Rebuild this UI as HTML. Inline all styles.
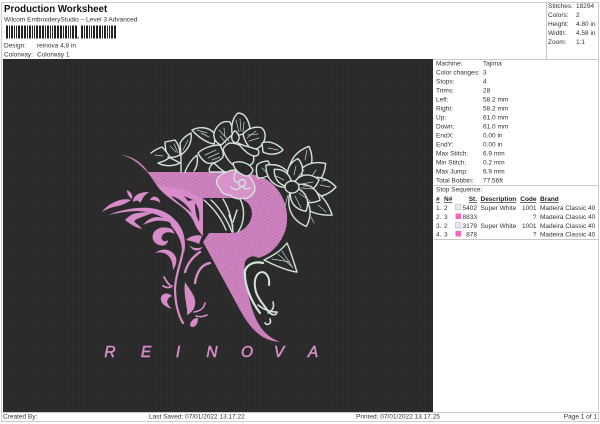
<!DOCTYPE html>
<html><head><meta charset="utf-8"><style>
html,body{margin:0;padding:0;background:#fff}
svg{display:block}
text{font-family:"Liberation Sans",sans-serif;font-size:6.5px;fill:#333}
.b{font-weight:bold;text-decoration:underline;fill:#222}
.w{fill:none;stroke:#d3e2dd;stroke-width:1.4;stroke-linejoin:round;stroke-linecap:round}
.t{fill:none;stroke:#c3d2ce;stroke-width:.7;stroke-linecap:round}
.o{fill:#d78bc9}
.s{fill:none;stroke:#d78bc9;stroke-linecap:round}
.l{font-family:"Liberation Sans",sans-serif;font-size:15.500px;font-style:italic;fill:#d78bc9;stroke:#d78bc9;stroke-width:.5;text-anchor:middle}
</style></head><body>
<svg width="600" height="424" viewBox="0 0 600 424" xmlns="http://www.w3.org/2000/svg">
<defs>
<pattern id="fab" width="11" height="24" patternUnits="userSpaceOnUse">
<rect width="11" height="24" fill="#2b2b2b"/>
<path d="M2 0V24M7 0V24" stroke="#2e2e2e" stroke-width="1"/>
<path d="M0 12H11" stroke="#272727" stroke-width="1" stroke-dasharray="1 1"/>
</pattern>
<pattern id="sat" width="3" height="3" patternUnits="userSpaceOnUse" patternTransform="rotate(-28)">
<rect width="3" height="3" fill="#c67bb8"/>
<path d="M0 .5H3" stroke="#d28bc5" stroke-width="1"/>
</pattern>
</defs>
<rect width="600" height="424" fill="#fff"/>
<path d="M1.500 2.500H598.500V421.500H1.500Z" fill="none" stroke="#ccc"/>
<path d="M546.500 2V59M433 59.500H599M2 412.500H599M433.500 185.500H599M433.500 239.500H599" stroke="#c8c8c8" fill="none"/>
<rect x="3" y="59" width="430" height="353" fill="url(#fab)"/>

<text x="4" y="12" style="font-size:9.700px;font-weight:bold;fill:#111">Production Worksheet</text>
<text x="4" y="21.500">Wilcom EmbroideryStudio – Level 3 Advanced</text>
<path d="M6 32H77" stroke="#222" stroke-width="13" stroke-dasharray="2 1 1 1 2 1 1 1 1 1 2 1 2 1"/>
<path d="M81 32H116" stroke="#222" stroke-width="13" stroke-dasharray="2 1 1 1 2 1 1 1 1 1 2 1 2 1"/>
<text x="77" y="38" style="font-weight:bold;font-size:7px">,</text>
<text x="4" y="47.500">Design:</text><text x="37" y="47.500">reinova 4,8 in</text>
<text x="4" y="56.500">Colorway:</text><text x="37" y="56.500">Colorway 1</text>

<text x="548" y="8">Stitches:</text><text x="576" y="8">18294</text>
<text x="548" y="17">Colors:</text><text x="576" y="17">2</text>
<text x="548" y="26">Height:</text><text x="576" y="26">4.80 in</text>
<text x="548" y="35">Width:</text><text x="576" y="35">4.58 in</text>
<text x="548" y="44">Zoom:</text><text x="576" y="44">1:1</text>

<g>
<text x="436" y="65.500">Machine:</text><text x="483" y="65.500">Tajima</text>
<text x="436" y="74.500">Color changes:</text><text x="483" y="74.500">3</text>
<text x="436" y="83.500">Stops:</text><text x="483" y="83.500">4</text>
<text x="436" y="92.500">Trims:</text><text x="483" y="92.500">28</text>
<text x="436" y="101.500">Left:</text><text x="483" y="101.500">58.2 mm</text>
<text x="436" y="110.500">Right:</text><text x="483" y="110.500">58.2 mm</text>
<text x="436" y="119.500">Up:</text><text x="483" y="119.500">61.0 mm</text>
<text x="436" y="128.500">Down:</text><text x="483" y="128.500">61.0 mm</text>
<text x="436" y="137.500">EndX:</text><text x="483" y="137.500">0.00 in</text>
<text x="436" y="146.500">EndY:</text><text x="483" y="146.500">0.00 in</text>
<text x="436" y="155.500">Max Stitch:</text><text x="483" y="155.500">6.9 mm</text>
<text x="436" y="164.500">Min Stitch:</text><text x="483" y="164.500">0.2 mm</text>
<text x="436" y="173.500">Max Jump:</text><text x="483" y="173.500">6.9 mm</text>
<text x="436" y="182.500">Total Bobbin:</text><text x="483" y="182.500">77.56ft</text>
<text x="436" y="191.500">Stop Sequence:</text>
<text x="436" y="201" class="b">#</text><text x="444" y="201" class="b">N#</text>
<text x="477" y="201" class="b" text-anchor="end">St.</text><text x="480.500" y="201" class="b">Description</text>
<text x="536.500" y="201" class="b" text-anchor="end">Code</text><text x="540" y="201" class="b">Brand</text>

<text x="436" y="210">1.</text><text x="444" y="210">2</text><rect x="455.500" y="204.500" width="5.500" height="5.500" fill="#e6e6f5" stroke="#aaa" stroke-width=".5"/>
<text x="477" y="210" text-anchor="end">5402</text><text x="480.500" y="210">Super White</text><text x="536.500" y="210" text-anchor="end">1001</text><text x="540" y="210">Madeira Classic 40</text>
<text x="436" y="219">2.</text><text x="444" y="219">3</text><rect x="455.500" y="213.500" width="5.500" height="5.500" fill="#f464c0"/>
<text x="477" y="219" text-anchor="end">8833</text><text x="536.500" y="219" text-anchor="end">?</text><text x="540" y="219">Madeira Classic 40</text>
<text x="436" y="228">3.</text><text x="444" y="228">2</text><rect x="455.500" y="222.500" width="5.500" height="5.500" fill="#e6e6f5" stroke="#aaa" stroke-width=".5"/>
<text x="477" y="228" text-anchor="end">3179</text><text x="480.500" y="228">Super White</text><text x="536.500" y="228" text-anchor="end">1001</text><text x="540" y="228">Madeira Classic 40</text>
<text x="436" y="236.500">4.</text><text x="444" y="236.500">3</text><rect x="455.500" y="231" width="5.500" height="5.500" fill="#f464c0"/>
<text x="477" y="236.500" text-anchor="end">878</text><text x="536.500" y="236.500" text-anchor="end">?</text><text x="540" y="236.500">Madeira Classic 40</text>
</g>

<text x="3" y="418.500">Created By:</text>
<text x="149" y="418.500">Last Saved: 07/01/2022 13.17.22</text>
<text x="356" y="418.500">Printed: 07/01/2022 13.17.25</text>
<text x="597" y="418.500" text-anchor="end">Page 1 of 1</text>

<!-- R body -->
<path fill="url(#sat)" fill-rule="evenodd" d="M121 155C133 156 142 163 148 172L212 172C235 172 258 172 270 182C283 192 290 210 286 228C282 243 271 255 258 258C254 255 248 256 245 262C243 272 248 298 254 314C260 331 270 338 280 342C264 341 252 332 240 310L203 242L209 233L232 233C244 232 251 224 252 214C252 205 246 199 236 198L203 198L190 192L157 186C152 178 148 172 143 168C137 162 130 157 121 155Z"/>
<!-- counter foliage -->
<g class="w">
<path d="M204 200C212 207 221 217 226 230M211 200C219 207 227 219 232 232M223 199C228 207 232 219 233 232M240 199C245 208 245 222 238 232"/>
<path d="M233 222L237 210M233 226L229 215"/>
</g>
<!-- small flower on R -->
<path class="w" d="M218 178C221 173 225 173 227 172C232 169 237 170 240 172C246 172 251 177 253 182C256 187 255 192 253 193C251 197 247 199 243 198C238 200 233 198 230 195C225 195 220 192 220 188C216 185 216 181 218 178Z" style="fill:#d792c9"/>
<circle cx="242" cy="183" r="3.500" class="w"/>
<path class="w" d="M236 172C232 178 234 182 239 183M250 188C245 190 243 188 242 186M231 187C235 191 239 190 241 186"/>

<!-- flower 1 -->
<g class="w" style="fill:#2b2b2b">
<path d="M192 130C198 127 208 126 214 133C215 138 215 142 214 144C207 143 198 137 192 130Z"/>
<path d="M214 133C216 126 222 120 230 122C232 126 233 130 233 134C228 138 224 143 221 145C216 143 213 138 214 133Z"/>
<path d="M232 133C231 125 233 117 238 113C244 113 248 118 250 128C247 131 245 133 243 134C238 136 234 135 232 133Z"/>
<path d="M243 134C248 128 256 126 262 128C266 132 266 138 263 143C260 148 255 150 252 150C248 146 244 140 243 134Z"/>
<path d="M198 153C203 148 212 145 220 145C222 149 224 153 223 157C219 162 212 164 207 163C203 161 200 157 198 153Z"/>
<path d="M262 143C269 140 278 144 283 150C279 154 271 156 263 152Z"/>
<path d="M257 165C260 162 265 161 268 161C271 166 271 172 269 175C265 178 261 178 258 178C256 174 256 168 257 165Z"/>
<path d="M214 163C219 168 224 172 226 172C222 172 218 172 210 172C208 170 210 165 214 163Z"/>
<path d="M223 150C224 146 228 143 231 143C238 143 248 149 253 155C255 160 253 164 250 165C246 168 240 168 237 167C231 165 226 158 223 150Z"/>
<path d="M233 163C240 160 250 163 253 170C252 174 249 176 246 176C240 174 234 170 233 163Z"/>
<path d="M232 135C234 130 236 130 237 133C240 136 240 140 236 143C232 142 231 138 232 135Z"/>
<path d="M238 143C243 146 252 147 258 150C260 153 258 156 255 156C250 156 243 150 238 143Z"/>
</g>
<path class="t" d="M239 132L236 120M243 132L244 122M241 131L240 119M247 138L256 131M249 141L259 138M248 135L258 134M229 141L219 130M226 143L220 136M225 137L224 128M207 133L197 130M209 137L201 133M205 155L216 150M208 158L219 153M212 160L220 157M268 148L278 150M262 168L266 172"/>
<!-- left tulip -->
<g class="w" style="fill:#2b2b2b">
<path d="M181 172V155"/>
<path d="M180 143C183 138 187 135 191 133C192 140 190 148 181 155Z"/>
<path d="M165 142L175 140C179 145 180 150 180 155C176 157 172 158 168 157C166 152 165 147 165 142Z"/>
<path d="M151 153C155 150 159 148 162 147C165 150 168 154 170 157C167 160 162 162 158 163C163 166 173 167 180 163C175 160 170 158 168 157"/>
<path d="M185 172C188 164 192 159 197 155C198 161 197 167 194 171"/>
</g>
<path class="t" d="M176 152L170 146M178 153L174 144M183 150L188 140M163 156L155 155"/>
<!-- flower 2 back row -->
<g class="w" style="fill:#2b2b2b">
<path transform="translate(292 187) rotate(20)" d="M0 0C-14 -14 -12 -32 2 -44C14 -32 14 -14 0 0Z"/>
<path transform="translate(292 187) rotate(55)" d="M0 0C-14 -14 -12 -30 0 -41C14 -30 14 -14 0 0Z"/>
<path transform="translate(292 187) rotate(90)" d="M0 0C-13 -14 -13 -32 0 -44C13 -32 13 -14 0 0Z"/>
<path transform="translate(292 187) rotate(125)" d="M0 0C-13 -14 -13 -32 0 -49C13 -32 13 -14 0 0Z"/>
<path transform="translate(292 187) rotate(160)" d="M0 0C-13 -14 -13 -30 0 -42C13 -30 13 -14 0 0Z"/>
<path transform="translate(292 187) rotate(-50)" d="M0 0C-12 -10 -12 -24 0 -34C12 -24 12 -10 0 0Z"/>
</g>
<!-- flower 2 front row -->
<g class="w" style="fill:#2b2b2b">
<path transform="translate(292 187) rotate(10)" d="M0 0C-10 -10 -9 -22 1 -29C10 -22 10 -10 0 0Z"/>
<path transform="translate(292 187) rotate(75)" d="M0 0C-11 -8 -11 -20 0 -28C11 -20 11 -8 0 0Z"/>
<path transform="translate(292 187) rotate(115)" d="M0 0C-11 -8 -11 -22 0 -31C11 -22 11 -8 0 0Z"/>
<path transform="translate(292 187) rotate(150)" d="M0 0C-10 -8 -10 -20 0 -28C10 -20 10 -8 0 0Z"/>
<path transform="translate(292 187) rotate(-45)" d="M0 0C-8 -8 -8 -18 0 -25C8 -18 8 -8 0 0Z"/>
<ellipse cx="292" cy="187" rx="7" ry="6"/>
</g>
<path class="t" d="M294 175L296 166M298 177L304 170M301 184L313 182M301 188L314 189M303 186L311 186M299 193L310 201M295 196L301 208M288 195L285 206M284 180L276 176M320 185L330 187M322 181L328 180M318 205L326 212M311 217L314 223M307 150L305 160M316 170L312 176"/>

<!-- ornament: mass under the bar -->
<path class="o" d="M157 186C166 186 178 188 190 192L203 198L203 236C199 232 196 228 194 222C190 214 184 208 176 203C170 198 162 193 157 186Z"/>
<path fill="#2b2b2b" d="M171 196C179 198 187 204 192 213C186 208 178 203 171 196ZM195 203C199 208 200 214 199 222C196 216 195 210 195 203ZM184 196L193 200L188 201Z"/>
<!-- ornament fronds -->
<g>
<path class="o" d="M102 212C106 206 113 202 120 200C124 199 128 199 131 200C127 203 122 205 118 206C112 207 107 209 102 212Z"/>
<path class="o" d="M127 190C131 192 133 195 132 199C129 197 127 194 127 190Z"/>
<path class="o" d="M133 202C133 198 136 194 141 193C144 192 146 192 149 192C146 194 144 196 143 198C142 200 141 202 140 203C139 200 136 200 133 202Z"/>
<path class="o" d="M150 200C151 197 154 196 156 197C159 198 160 200 160 203C158 201 155 200 150 200Z"/>
<path class="o" d="M108 215C120 210 135 207 150 208C162 209 173 215 180 226C185 234 186 245 184 253C182 243 179 233 172 225C164 216 152 212 138 211C128 211 118 213 108 215Z"/>
<path class="o" d="M125 220C129 216 133 213 138 213C144 212 149 212 153 213C147 215 142 217 137 219L134 221C136 224 139 225 142 229C136 228 130 224 125 220Z"/>
<path class="o" d="M143 225C147 220 152 217 157 217C162 217 167 219 170 222C165 221 160 220 155 221C151 222 147 223 143 225Z"/>
<path class="o" d="M172 229C165 226 158 227 154 232C151 237 153 243 159 245C164 247 168 244 168 240C165 243 160 240 162 236C164 232 169 231 175 234Z"/>
<path class="o" d="M155 253C160 249 168 248 173 253C178 258 177 264 173 270C173 263 171 257 166 254C163 252 159 252 155 253Z"/>
<path class="s" style="stroke-width:2.200" d="M172 225C178 232 183 240 183 250C182 260 176 272 175 288C175 302 178 315 183 323"/>
<path class="s" style="stroke-width:1.800" d="M164 277C167 282 168 284 170 285M163 286C167 288 170 288 172 286"/>
<path class="o" d="M172 296C168 292 163 293 161 297C160 302 163 306 172 309C168 305 166 302 168 299C169 297 171 297 172 296Z"/>
<path class="s" style="stroke-width:2.400" d="M200 252C194 256 188 262 185 272"/>
<path class="s" style="stroke-width:2.400" d="M210 263C203 264 197 270 195 283"/>
<path class="o" d="M185 282C190 290 197 298 195 305C194 310 191 313 187 315C188 307 183 295 185 282Z"/>
<path class="s" style="stroke-width:1.600" d="M205 303C204 308 201 311 194 312M207 315C203 317 199 317 196 316"/>
<path class="o" d="M190 325C191 320 194 318 198 318C198 322 197 326 193 327C191 327 190 326 190 325Z"/>
<path class="o" d="M186 240C190 236 197 234 202 236L199 244C195 242 191 241 186 240Z"/>
<path class="o" d="M189 245C192 248 197 249 203 247C199 252 193 252 189 245Z"/>
</g>

<!-- lower-right white swirl and leaf -->
<g class="w">
<path d="M264 260C272 256 280 252 287 243C291 252 294 263 297 272C288 271 276 266 264 260Z" style="fill:#2b2b2b"/>
<path class="t" d="M272 259L290 262M278 254L291 266M282 251L293 268"/>
<path style="stroke-width:2.200" d="M263 263C255 261 247 264 245 271C244 283 250 300 260 313"/>
<path style="stroke-width:2" d="M269 285C270 276 265 270 259 273C254 277 254 285 256 292C259 301 265 306 268 311"/>
<path style="stroke-width:1.600" d="M258 305C263 309 270 312 277 312C276 316 272 315 270 313M273 302C275 308 271 312 268 313M270 319C272 324 267 326 265 323"/>
</g>

<text class="l" x="110" y="357">R</text>
<text class="l" x="146" y="357">E</text>
<text class="l" x="178" y="357">I</text>
<text class="l" x="212" y="357">N</text>
<text class="l" x="247" y="357">O</text>
<text class="l" x="279" y="357">V</text>
<text class="l" x="313" y="357">A</text>
</svg>
</body></html>
